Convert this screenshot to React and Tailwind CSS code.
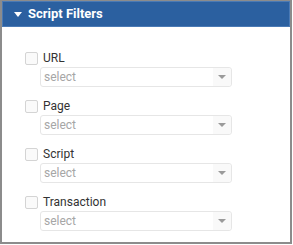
const filters = ["URL", "Page", "Script", "Transaction"];

function Row({ label }) {
  return (
    <div className="flex flex-col">
      <div className="flex items-center h-[15px]">
        <span className="w-[13px] h-[13px] rounded-[2px] border border-[#d4d4d4] bg-[#fafafa] ml-[23px]" />
        <span className="ml-[5px] text-[12px] leading-[15px] text-[#333]">{label}</span>
      </div>
      <div className="ml-[38px] mt-[1px] w-[192px] h-[20px] flex items-center rounded-[3px] border border-[#e6e6e6] bg-white">
        <span className="flex-1 pl-[3px] text-[12px] leading-[18px] text-[#a6a6a6]">select</span>
        <span className="w-[18px] h-full flex items-center justify-center bg-[#f9f9f9] rounded-r-[3px]">
          <span className="w-0 h-0 border-l-[4px] border-r-[4px] border-t-[4px] border-l-transparent border-r-transparent border-t-[#9a9a9a]" />
        </span>
      </div>
    </div>
  );
}

export default function App() {
  return (
    <div className="w-[293px] h-[245px] bg-white font-['Roboto',sans-serif]">
      <div className="w-[292px] h-[244px] border-t border-l-2 border-r-2 border-b-2 border-[#8c8c8c] flex flex-col">
        <div className="h-[26px] bg-[#2b60a0] border border-[#4a7ab5] flex items-center">
          <span className="ml-[11px] w-0 h-0 border-l-[4px] border-r-[4px] border-t-[5px] border-l-transparent border-r-transparent border-t-white" />
          <span className="ml-[6px] text-[13px] font-bold text-white">Script Filters</span>
        </div>
        <div className="flex flex-col gap-[12px] pt-[24px]">
          {filters.map((f) => (
            <Row key={f} label={f} />
          ))}
        </div>
      </div>
    </div>
  );
}
